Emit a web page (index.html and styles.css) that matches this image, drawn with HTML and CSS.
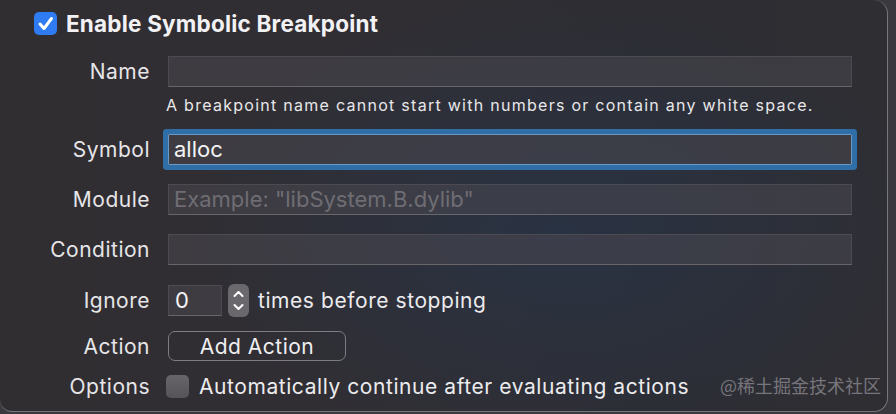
FILE: index.html
```html
<!DOCTYPE html>
<html>
<head>
<meta charset="utf-8">
<link rel="stylesheet" href="styles.css">
</head>
<body>
<div class="panel">
  <div class="title-row">
    <span class="check on">
      <svg viewBox="0 0 23 23" width="23" height="23"><path d="M6 12 L10 16.5 L17.5 6.5" fill="none" stroke="#fff" stroke-width="3" stroke-linecap="round" stroke-linejoin="round"/></svg>
    </span>
    <span class="title">Enable Symbolic Breakpoint</span>
  </div>

  <div class="row r-name">
    <label class="lbl">Name</label>
    <div class="field"></div>
  </div>
  <div class="row r-hint">
    <span></span>
    <div class="hint">A breakpoint name cannot start with numbers or contain any white space.</div>
  </div>
  <div class="row r-symbol">
    <label class="lbl">Symbol</label>
    <div class="field focus">alloc</div>
  </div>
  <div class="row r-module">
    <label class="lbl">Module</label>
    <div class="field placeholder">Example: "libSystem.B.dylib"</div>
  </div>
  <div class="row r-cond">
    <label class="lbl">Condition</label>
    <div class="field"></div>
  </div>
  <div class="row r-ignore">
    <label class="lbl">Ignore</label>
    <div class="inline">
      <div class="field small">0</div>
      <div class="stepper">
        <svg viewBox="0 0 21 33" width="21" height="33"><path d="M6.5 12 L10.5 8 L14.5 12" fill="none" stroke="#fff" stroke-width="2" stroke-linecap="round" stroke-linejoin="round"/><path d="M6.5 21 L10.5 25 L14.5 21" fill="none" stroke="#fff" stroke-width="2" stroke-linecap="round" stroke-linejoin="round"/></svg>
      </div>
      <span class="text">times before stopping</span>
    </div>
  </div>
  <div class="row r-action">
    <label class="lbl">Action</label>
    <div class="inline"><button class="btn">Add Action</button></div>
  </div>
  <div class="row r-options">
    <label class="lbl">Options</label>
    <div class="inline">
      <span class="check off"></span>
      <span class="text">Automatically continue after evaluating actions</span>
    </div>
  </div>
  <div class="watermark">@稀土掘金技术社区</div>
</div>
</body>
</html>
```

FILE: styles.css
```css
html, body {
  margin: 0;
  padding: 0;
}
body {
  width: 896px;
  height: 414px;
  background: #3a393e;
  overflow: hidden;
  font-family: Inter, "Liberation Sans", sans-serif;
  color: #e8e7ea;
}
.panel {
  position: relative;
  box-sizing: border-box;
  width: 888px;
  height: 412px;
  border-right: 1px solid #77767b;
  border-bottom: 1px solid #77767b;
  border-radius: 0 14px 14px 12px;
  background:
    radial-gradient(ellipse 380px 230px at 560px 230px, rgba(40, 52, 72, 0.75), rgba(40, 52, 72, 0) 100%),
    linear-gradient(90deg, #312e32 0%, #302e33 45%, #2d2d33 75%, #2f2e33 100%);
  overflow: hidden;
}
.title-row {
  display: flex;
  align-items: center;
  gap: 9px;
  margin-left: 34px;
  padding-top: 12px;
  height: 23px;
}
.check {
  box-sizing: border-box;
  width: 23px;
  height: 23px;
  border-radius: 5px;
  flex: none;
  display: block;
}
.check svg { display: block; }
.check.on {
  background: #2f7cf2;
}
.check.off {
  background: linear-gradient(#67656a, #555358);
}
.title {
  font-weight: 700;
  font-size: 22.5px;
  color: #f2f1f4;
  letter-spacing: 0.2px;
}
.row {
  display: grid;
  grid-template-columns: 150px 684px;
  column-gap: 18px;
  align-items: center;
}
.lbl {
  text-align: right;
  font-size: 21px;
  letter-spacing: 0.5px;
  color: #e6e5e8;
}
.field {
  box-sizing: border-box;
  height: 31px;
  background: rgba(80, 78, 84, 0.45);
  border: 1px solid #4d4b51;
  border-bottom-color: #68666b;
  font-size: 22px;
  line-height: 29px;
  padding-left: 5px;
  color: #f4f4f6;
}
.field.placeholder {
  color: #6f6d73;
}
.field.focus {
  border: 1px solid #6c98c4;
  border-radius: 1px;
  box-shadow: 0 0 0 5px #2f6ea6;
}
.field.small {
  width: 54px;
  padding-left: 6px;
}
.r-name { margin-top: 21px; }
.r-hint { margin-top: 8px; height: 18px; }
.hint {
  font-size: 16px;
  color: #e8e7ea;
  margin-left: -2px;
  letter-spacing: 1.27px;
  white-space: nowrap;
}
.r-symbol { margin-top: 21px; }
.r-module { margin-top: 19px; }
.r-cond { margin-top: 19px; }
.r-ignore { margin-top: 19px; }
.r-action { margin-top: 14px; height: 30px; }
.r-options { margin-top: 13px; height: 23px; }
.inline {
  display: flex;
  align-items: center;
}
.stepper {
  margin-left: 6px;
  width: 21px;
  height: 33px;
  border-radius: 6px;
  background: #6a686d;
}
.stepper svg { display: block; }
.text {
  font-size: 21px;
  letter-spacing: 0.57px;
  color: #ecebee;
  margin-left: 9px;
  white-space: nowrap;
}
.r-options .inline { margin-left: -2px; }
.r-options .text { margin-left: 10px; }
.btn {
  box-sizing: border-box;
  width: 178px;
  height: 30px;
  border: 1.5px solid #7e7c82;
  border-radius: 7px;
  background: transparent;
  color: #efeef1;
  font-family: Inter, "Liberation Sans", sans-serif;
  font-size: 21px;
  letter-spacing: 0.5px;
  padding: 0;
}
.watermark {
  position: absolute;
  left: 720px;
  top: 372px;
  font-family: "Noto Sans CJK SC", sans-serif;
  font-size: 18px;
  line-height: 26px;
  color: #77757b;
}
```
